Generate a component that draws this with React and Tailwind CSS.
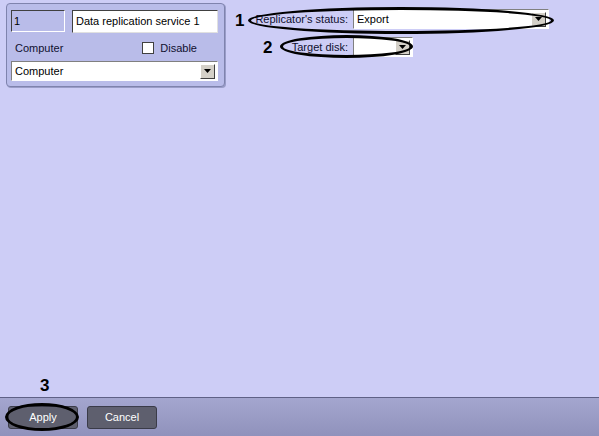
import React from "react";

function Arrow() {
  return (
    <div className="w-[15px] h-[15px] bg-[#d4d0c8] border border-t-white border-l-white border-r-[#404040] border-b-[#404040] flex items-center justify-center">
      <svg width="7" height="4" viewBox="0 0 7 4">
        <path d="M0 0h7L3.5 4z" fill="#000" />
      </svg>
    </div>
  );
}

function Select({ value, className }) {
  return (
    <div
      className={
        "bg-white border border-t-[#808080] border-l-[#808080] border-r-white border-b-white flex items-center justify-between pl-[3px] pr-[2px] " +
        className
      }
    >
      <span className="text-[11px] text-black leading-none">{value}</span>
      <Arrow />
    </div>
  );
}

function Ring({ className }) {
  return (
    <div
      className={
        "absolute border-[3px] border-black rounded-[50%] pointer-events-none " + className
      }
    />
  );
}

export default function App() {
  return (
    <div
      className="relative w-[599px] h-[436px] flex flex-col bg-[#cdcdf6] overflow-hidden"
      style={{ fontFamily: '"Liberation Sans", Arial, sans-serif' }}
    >
      <div className="flex-1 flex items-start">
        <div className="ml-[6px] mt-[3px] w-[219px] h-[84px] rounded-[4px] border border-[#7f83ad] bg-[#b9bce9] px-[4px] pt-[6px] shadow-[1px_1px_0_#9a9dc8]">
          <div className="flex gap-[7px]">
            <div className="w-[54px] h-[22px] border border-t-[#404040] border-l-[#404040] border-r-white border-b-white flex items-center pl-[2px] text-[11px] text-black">
              1
            </div>
            <div className="w-[146px] h-[23px] bg-white border border-t-[#404040] border-l-[#404040] border-r-[#e0e0e0] border-b-[#e0e0e0] flex items-center pl-[3px] text-[11px] text-black">
              Data replication service 1
            </div>
          </div>
          <div className="flex items-center h-[22px] mt-[4px] text-[11px] text-[#101030]">
            <span className="ml-[4px]">Computer</span>
            <div className="ml-[79px] w-[12px] h-[12px] bg-white border border-[#404040]" />
            <span className="ml-[6px]">Disable</span>
          </div>
          <Select value="Computer" className="mt-[2px] w-[207px] h-[20px]" />
        </div>

        <div className="ml-[28px] mt-[9px] grid grid-cols-[95px_auto] gap-x-[5px] gap-y-[8px] items-center text-[11px] text-[#101030] whitespace-nowrap">
          <span className="text-right">Replicator's status:</span>
          <Select value="Export" className="w-[196px] h-[20px]" />
          <span className="text-right">Target disk:</span>
          <Select value="" className="w-[60px] h-[20px]" />
        </div>
      </div>

      <div className="h-[39px] border-t border-[#5f6186] bg-gradient-to-b from-[#a4a6cf] to-[#9092bc] flex items-center gap-[9px] pl-[8px]">
        <button className="w-[70px] h-[23px] rounded-[3px] bg-[#5e5f6e] border border-[#3a3b48] text-white text-[11px]">
          Apply
        </button>
        <button className="w-[70px] h-[23px] rounded-[3px] bg-[#5e5f6e] border border-[#3a3b48] text-white text-[11px]">
          Cancel
        </button>
      </div>

      <span className="absolute left-[235px] top-[12px] text-[17px] font-bold text-black leading-none">1</span>
      <span className="absolute left-[263px] top-[39px] text-[17px] font-bold text-black leading-none">2</span>
      <span className="absolute left-[40px] top-[377px] text-[17px] font-bold text-black leading-none">3</span>

      <Ring className="left-[248px] top-[7px] w-[306px] h-[27px]" />
      <Ring className="left-[280px] top-[35px] w-[133px] h-[23px]" />
      <Ring className="left-[5px] top-[403px] w-[74px] h-[28px]" />
    </div>
  );
}
